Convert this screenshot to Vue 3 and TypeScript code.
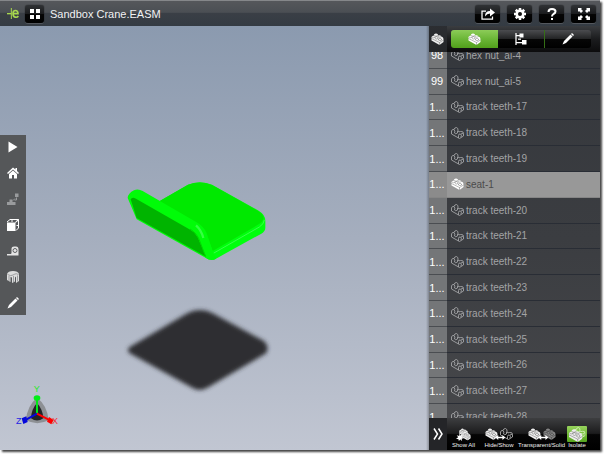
<script setup lang="ts">
import { ref } from 'vue'

interface Part {
  index: string
  name: string
}

const parts: Part[] = [
  { index: '98', name: 'hex nut_ai-4' },
  { index: '99', name: 'hex nut_ai-5' },
  { index: '1...', name: 'track teeth-17' },
  { index: '1...', name: 'track teeth-18' },
  { index: '1...', name: 'track teeth-19' },
  { index: '1...', name: 'seat-1' },
  { index: '1...', name: 'track teeth-20' },
  { index: '1...', name: 'track teeth-21' },
  { index: '1...', name: 'track teeth-22' },
  { index: '1...', name: 'track teeth-23' },
  { index: '1...', name: 'track teeth-24' },
  { index: '1...', name: 'track teeth-25' },
  { index: '1...', name: 'track teeth-26' },
  { index: '1...', name: 'track teeth-27' },
  { index: '1...', name: 'track teeth-28' },
]

const selected = ref('seat-1')
</script>

<template>
  <div class="page">
    <svg class="defs" aria-hidden="true">
      <symbol id="brick" viewBox="0 0 26 24">
        <path d="M1 8 Q2 5 6 5 V3 Q10 -1 14 3 V5 Q18 3 21 7 Q25 8 25 12 V18 L17 24 L1 15 Z" fill="currentColor" />
        <g fill="none" stroke="#000" stroke-opacity="0.38" stroke-width="1.4">
          <path d="M1 11 L17 19 L25 14 M17 19 V24" />
          <path d="M6 5 Q10 8 14 5 M2 8 Q5 11 8 8 M8 10 V8 Q11 6 14 8 V11 Q11 13 8 11 M14 7 Q18 10 21 7 M15 14 V12 Q18 9 21 12 V14 Q18 17 15 14" />
        </g>
      </symbol>
      <symbol id="brick-line" viewBox="0 0 26 24">
        <g fill="none" stroke="currentColor" stroke-width="1.8" stroke-linejoin="round">
          <path d="M1 8 Q2 4 6 5 Q7 1 11 1 Q15 2 14 8 Q15 11 19 9 Q25 8 25 13 V18 L17 23 L1 14 Z" />
          <path d="M6 5 Q9 8 7 12 Q9 15 13 12 V8 M15 22 V17 Q15 13 19 14 Q22 16 20 20 M20 14 L25 12" />
        </g>
      </symbol>
      <symbol id="pencil" viewBox="0 0 24 24">
        <path d="M1 23 L4 16 L17 3 L21 7 L8 20 Z" fill="currentColor" />
        <path d="M18 2 L20 0 L24 4 L22 6 Z" fill="currentColor" />
      </symbol>
      <symbol id="swap" viewBox="0 0 24 12">
        <path d="M0 6 L7 0 V4 H17 V0 L24 6 L17 12 V8 H7 V12 Z" fill="#fff" />
      </symbol>
    </svg>

    <div class="screen">
      <header class="topbar">
        <a class="logo" href="#" aria-label="eDrawings">
          <svg viewBox="0 0 36 33">
            <g fill="none" stroke="#a8d84e">
              <path d="M0 17 H13" stroke-width="4" />
              <path d="M13 0 V33" stroke-width="3" />
              <path d="M19 17 H33 C33 4 18 5 18 17 C18 29 30 30 34 24" stroke-width="5" />
            </g>
          </svg>
        </a>
        <button class="key small" aria-label="Files">
          <svg viewBox="0 0 10 10"><path d="M0 0h4v4H0zM6 0h4v4H6zM0 6h4v4H0zM6 6h4v4H6z" fill="#fff" /></svg>
        </button>
        <h1>Sandbox Crane.EASM</h1>
        <nav class="actions">
          <button class="key" aria-label="Share">
            <svg class="share" viewBox="0 0 28 24">
              <path d="M10 6 H2 V22 H23 V17" fill="none" stroke="#fff" stroke-width="2.500" />
              <path d="M8 17 Q8 6 18 6 V1 L28 9 L18 17 V11 Q12 11 8 17 Z" fill="#fff" />
            </svg>
          </button>
          <button class="key" aria-label="Settings">
            <svg viewBox="0 0 24 24">
              <g stroke="#fff" stroke-width="5">
                <path d="M12 0 V24 M0 12 H24 M3.500 3.500 L20.500 20.500 M20.500 3.500 L3.500 20.500" />
              </g>
              <circle cx="12" cy="12" r="9" fill="#fff" />
              <circle cx="12" cy="12" r="4" fill="#111" />
            </svg>
          </button>
          <button class="key" aria-label="Help">
            <svg viewBox="0 0 24 24">
              <path d="M5 8 Q5 2 12 2 Q19 2 19 7 Q19 10 15 12 Q12 14 12 17" fill="none" stroke="#fff" stroke-width="4" />
              <path d="M10 20 h4 v4 h-4z" fill="#fff" />
            </svg>
          </button>
          <button class="key" aria-label="Full screen">
            <svg viewBox="0 0 24 24">
              <path d="M0 0h8L6 2l4 4-4 4-4-4-2 2zM24 0v8l-2-2-4 4-4-4 4-4-2-2zM0 24v-8l2 2 4-4 4 4-4 4 2 2zM24 24h-8l2-2-4-4 4-4 4 4 2-2z" fill="#fff" />
            </svg>
          </button>
        </nav>
      </header>

      <div class="body">
        <main class="stage">
          <svg class="model" viewBox="0 0 540 720" role="img" aria-label="Seat part with ground shadow">
            <defs>
              <filter id="soft" x="-10%" y="-10%" width="120%" height="120%">
                <feGaussianBlur stdDeviation="6" />
              </filter>
            </defs>
            <path d="M58 532 L232 430 Q270 410 308 430 L462 513 Q480 531 468 550 L296 651 Q270 668 244 652 L58 549 Q50 541 58 532 Z" fill="#2e2f32" filter="url(#soft)" />
            <path d="M148 94 L234 44 Q270 29 306 44 L446 122 Q466 134 466 152 V174 Q466 184 454 191 L318 266 Q303 275 288 264 Z" fill="#00ff0c" />
            <path d="M148 94 L234 44 Q270 31 306 45 L444 123 Q464 136 460 148 Q458 156 446 163 L308 243 L286 186 Z" fill="#00e900" />
            <path d="M310 250 L448 171 Q462 162 463 150" fill="none" stroke="#38ff48" stroke-width="3" />
            <path d="M53 84 Q54 70 72 61 Q84 55 98 63 L252 152 Q282 168 290 190 L308 243 L318 266 Q304 274 288 264 L80 148 Z" fill="#00fc08" />
            <path d="M62 88 Q66 80 78 86 L238 178 Q260 190 268 214 L288 260 L80 144 Z" fill="#00b400" />
            <path d="M258 166 Q274 180 280 204" fill="none" stroke="#35ff42" stroke-width="7" />
            <path d="M240 177 Q262 190 270 215 L287 260" fill="none" stroke="#00d800" stroke-width="3" />
          </svg>

          <svg class="triad" viewBox="0 -9 126 123" role="img" aria-label="X, Y and Z axes">
            <path d="M63 32 Q33 56 30 100 Q64 117 98 100 Q94 55 63 32 Z" fill="#8d9094" />
            <path d="M63 48 Q46 66 45 94 Q63 107 82 94 Q80 66 63 48 Z" fill="#222326" />
            <path d="M63 80 V35" stroke="#00e718" stroke-width="6" />
            <ellipse cx="63" cy="33" rx="10" ry="8" fill="#00ed16" />
            <path d="M63 80 L32 97" stroke="#0507db" stroke-width="6" />
            <path d="M17 94 L31 88 L35 105 L22 111 Z" fill="#0507db" />
            <path d="M63 80 L98 98" stroke="#f00" stroke-width="6" />
            <path d="M113 99 L99 90 L93 104 L106 112 Z" fill="#f00" />
            <text x="53" y="15" fill="#27e82b">Y</text>
            <text x="0" y="110" fill="#2424e3">Z</text>
            <text x="108" y="110" fill="#f32d36">X</text>
          </svg>

          <nav class="tools" aria-label="View tools">
            <button aria-label="Play"><svg viewBox="0 0 24 24"><path d="M3 1 L21 12 L3 23 Z" fill="#fff" /></svg></button>
            <button aria-label="Home">
              <svg viewBox="0 0 24 24"><path d="M12 1 L0 12 L2 14 L12 5 L22 14 L24 12 L20 8 V2 H17 V5 Z M4 14 L12 7 L20 14 V23 H14 V16 H10 V23 H4 Z" fill="#fff" /></svg>
            </button>
            <button aria-label="Explode">
              <svg viewBox="0 0 24 24"><path d="M0 18 h5 v-5 h6 v5 h6 v6 H0z M16 1 h7 v7 h-7z" fill="#999b9d" /><path d="M12 15 l4-4 M19 9 v5 h-4" fill="none" stroke="#999b9d" stroke-width="2" /></svg>
            </button>
            <button aria-label="Orientation">
              <svg viewBox="0 0 24 24">
                <path d="M0 7 H17 V24 H0 Z" fill="#fff" />
                <path d="M0 6 L6 1 H23 L17 6 M23 1 V18 L18 23 M10 1 V6 M17 7 L23 2 M19 13 h4" fill="none" stroke="#fff" stroke-width="2" />
              </svg>
            </button>
            <button aria-label="Measure">
              <svg viewBox="0 0 24 24">
                <path d="M0 21 V17 H9 V7 Q9 3 14 3 H18 Q23 3 23 9 V21 Z" fill="#e4e4e4" />
                <path d="M0 17 H8" stroke="#555759" stroke-width="2" />
                <circle cx="16" cy="11" r="4" fill="none" stroke="#606264" stroke-width="2" />
              </svg>
            </button>
            <button aria-label="Section">
              <svg viewBox="0 0 24 24">
                <path d="M0 6 Q2 0 12 0 Q22 0 24 6 V20 L18 24 V13 L16 11 V21 L10 24 V13 L7 12 V22 L0 18 Z" fill="#dcdddd" />
                <path d="M1 7 Q8 11 12 8 Q20 3 23 8 M4 10 V20 M13 10 V22 M21 9 V21" fill="none" stroke="#85878a" stroke-width="1.500" />
              </svg>
            </button>
            <button aria-label="Markup"><svg viewBox="0 0 24 24"><use href="#pencil" color="#fff" /></svg></button>
          </nav>
        </main>

        <aside class="panel">
          <div class="panel-head">
            <div class="corner"><svg class="brick"><use href="#brick" /></svg></div>
            <div class="tab-bar">
              <div class="tabs">
                <button class="active" aria-label="Components"><svg class="brick"><use href="#brick" /></svg></button>
                <button aria-label="Tree">
                  <svg viewBox="0 0 24 24">
                    <path d="M2 0 V24 M2 5 H11 M2 19 H15" fill="none" stroke="#fff" stroke-width="2.500" />
                    <path d="M9 1 h8 v8 H9z M14 14 h9 v9 h-9z" fill="#fff" />
                    <path d="M6 11 h6 v3 H6z" fill="#ccc" />
                  </svg>
                </button>
                <button aria-label="Markups"><svg viewBox="0 0 24 24"><use href="#pencil" /></svg></button>
              </div>
            </div>
          </div>

          <ul class="parts">
            <li v-for="part in parts" :key="part.name" :class="{ selected: part.name === selected }">
              <button @click="selected = part.name">
                <span class="index">{{ part.index }}</span>
                <span class="name">
                  <svg class="brick">
                    <use :href="part.name === selected ? '#brick' : '#brick-line'" />
                  </svg>
                  {{ part.name }}
                </span>
              </button>
            </li>
          </ul>

          <footer class="panel-foot">
            <button class="corner" aria-label="Collapse panel">
              <svg viewBox="0 0 20 24"><path d="M2 1 L9 12 L2 23 M11 1 L18 12 L11 23" fill="none" stroke="#fff" stroke-width="3" /></svg>
            </button>
            <div class="modes">
              <button>
                <span class="glyph">
                  <svg viewBox="0 0 42 36">
                    <use href="#brick" x="8" y="0" width="26" height="24" />
                    <use href="#brick" x="15" y="9" width="27" height="26" />
                    <path d="M10 14 L12 21 L19 18 L16 25 L23 28 L16 30 L17 36 L12 32 L8 36 L7 31 L0 30 L6 26 L2 20 L9 22 Z" fill="#fff" />
                  </svg>
                </span>
                Show All
              </button>
              <button>
                <span class="glyph">
                  <svg class="wide" viewBox="0 0 84 36">
                    <use href="#brick" x="0" y="0" width="39" height="36" />
                    <use class="dim" href="#brick-line" x="45" y="0" width="39" height="36" />
                    <use href="#swap" x="31" y="21" width="30" height="15" />
                  </svg>
                </span>
                Hide/Show
              </button>
              <button>
                <span class="glyph">
                  <svg class="wide" viewBox="0 0 84 36">
                    <use href="#brick" x="0" y="0" width="39" height="36" />
                    <use class="faint" href="#brick" x="45" y="0" width="39" height="36" />
                    <use href="#swap" x="31" y="21" width="30" height="15" />
                  </svg>
                </span>
                Transparent/Solid
              </button>
              <button>
                <span class="glyph lit">
                  <svg viewBox="0 0 48 42">
                    <use class="pale" href="#brick-line" x="14" y="0" width="34" height="32" />
                    <use href="#brick" x="0" y="5" width="40" height="37" />
                  </svg>
                </span>
                Isolate
              </button>
            </div>
          </footer>
        </aside>
      </div>
    </div>
  </div>
</template>

<style>
body {
  margin: 0;
  background: #fff;
}
</style>

<style scoped>
.page {
  box-sizing: border-box;
  height: 100vh;
  padding: 0 4px 4px 0;
  font-family: 'Liberation Sans', Arial, sans-serif;
}

.page * {
  box-sizing: border-box;
}

.defs {
  position: absolute;
  width: 0;
  height: 0;
}

button {
  display: flex;
  align-items: center;
  justify-content: center;
  margin: 0;
  padding: 0;
  border: 0;
  background: none;
  color: inherit;
  font: inherit;
  cursor: pointer;
}

.screen {
  display: flex;
  flex-direction: column;
  height: 100%;
  box-shadow: 2px 2px 2px #444;
}

.topbar {
  display: flex;
  flex: none;
  align-items: center;
  height: 26px;
  padding: 0 4px 0 7px;
  border-top: 1px solid #85878a;
  background: linear-gradient(#55575b, #4b4f54 45%, #3a3f46 50%, #343b43);
}

.logo {
  display: flex;
  width: 12px;
  margin-right: 6px;
}

.logo svg {
  width: 12px;
  height: 11px;
}

.key {
  width: 25px;
  height: 18px;
  border-radius: 3px;
  background: linear-gradient(#303235, #1b1c1e 48%, #050505 52%, #000);
  box-shadow: 0 0 1px #000, 0 1px 0 #5c6168;
}

.key svg {
  width: 12px;
  height: 12px;
}

.key .share {
  width: 14px;
}

.key.small {
  width: 19px;
}

.key.small svg {
  width: 10px;
  height: 10px;
}

h1 {
  flex: 1;
  margin: 0 0 0 6px;
  color: #f1f2f3;
  font-size: 11px;
  font-weight: 400;
  line-height: 16px;
}

.actions {
  display: flex;
  gap: 7px;
}

.body {
  display: flex;
  flex: 1;
  min-height: 0;
}

.stage {
  position: relative;
  display: flex;
  flex: 1;
  align-items: center;
  padding-bottom: 26px;
  background: linear-gradient(#8b9aaf, #a5aebe 50%, #c1c6d2);
}

.model {
  position: absolute;
  top: 144px;
  left: 110px;
  width: 180px;
  height: 240px;
}

.triad {
  position: absolute;
  bottom: 25px;
  left: 16px;
  width: 42px;
  height: 41px;
}

.triad text {
  font-size: 27px;
}

.tools {
  position: relative;
  display: flex;
  flex-direction: column;
  gap: 2px;
  background: #555759;
}

.tools button {
  width: 26px;
  height: 24px;
}

.tools svg {
  width: 12px;
  height: 12px;
}

.panel {
  position: relative;
  display: flex;
  flex: none;
  flex-direction: column;
  width: 171px;
  overflow: hidden;
  background: linear-gradient(#34373c, #3b3d41 50%, #48494c);
  color: #fff;
}

.stage::after {
  position: absolute;
  top: 0;
  right: 0;
  bottom: 0;
  width: 3px;
  background: linear-gradient(to right, transparent, #0004);
  content: '';
}

.brick {
  flex: none;
  width: 13px;
  height: 12px;
}

.panel-head,
.panel-foot {
  position: relative;
  z-index: 1;
  display: flex;
  flex: none;
}

.panel-head {
  height: 26px;
}

.corner {
  display: flex;
  flex: none;
  align-items: center;
  justify-content: center;
  width: 18px;
  padding-right: 2px;
  background: linear-gradient(#2c2e32, #242629);
  color: #eee;
}

.tab-bar {
  flex: 1;
  padding: 4px 9px 4px 4px;
  background: linear-gradient(#3b3d40, #1b1c1e 50%, #0c0c0d);
}

.tabs {
  display: grid;
  grid-template-columns: repeat(3, 1fr);
  height: 18px;
  overflow: hidden;
  border-radius: 3px;
  background: linear-gradient(#4b4c4f, #232425 48%, #060606 52%, #000);
}

.tabs button + button + button {
  border-left: 1px solid #356e16;
}

.tabs .active {
  background: linear-gradient(#8ccc58, #6bb637 50%, #51a01b);
}

.tabs svg:not(.brick) {
  width: 12px;
  height: 12px;
}

/* The first and last rows run under the bars above and below the list. */
.parts {
  display: grid;
  flex: 1;
  grid-auto-rows: minmax(0, 1fr);
  min-height: 0;
  margin: -9px 0 -12px;
  padding: 0;
  list-style: none;
}

.parts li {
  min-height: 0;
}

.parts button {
  align-items: stretch;
  justify-content: flex-start;
  width: 100%;
  height: 100%;
  text-align: left;
}

.index {
  display: flex;
  align-items: center;
  justify-content: center;
  width: 18px;
  padding-right: 2px;
  border-bottom: 1px solid #4a4d51;
  background: #747678;
  color: #fff;
  font-size: 11px;
}

.name {
  display: flex;
  flex: 1;
  align-items: center;
  gap: 2px;
  padding-left: 4px;
  border-bottom: 1px solid #292d35;
  color: #a3a4a6;
  font-size: 10px;
}

.selected .index,
.selected .name {
  border-bottom-color: #858585;
  background: #989898;
}

.selected .index {
  background: #8b8b8b;
}

.selected .name {
  color: #4b4b4b;
}

.selected .brick {
  color: #fff;
}

.panel-foot {
  height: 32px;
}

.panel-foot .corner {
  padding-right: 0;
  background: #242528;
}

.panel-foot .corner svg {
  width: 10px;
  height: 12px;
}

.modes {
  display: grid;
  flex: 1;
  grid-template-columns: 33px 38px 47px 24px;
  background: linear-gradient(#3d3e40, #1c1c1d 48%, #050505 52%, #000);
}

.modes button {
  flex-direction: column;
  justify-content: flex-start;
  padding-top: 8px;
  color: #eee;
  font-size: 6px;
  line-height: 6px;
  white-space: nowrap;
}

.glyph {
  display: flex;
  align-items: center;
  justify-content: center;
  width: 20px;
  height: 16px;
}

.glyph svg {
  width: 15px;
  height: 13px;
}

.glyph .wide {
  flex: none;
  width: 28px;
  height: 12px;
}

.glyph.lit {
  border-radius: 1px;
  background: linear-gradient(#97d35c, #55a51e);
}

.glyph.lit svg {
  width: 18px;
  height: 15px;
}

.dim {
  color: #aaa;
}

.faint {
  color: #858585;
}

.pale {
  color: #d8f2bd;
}
</style>
